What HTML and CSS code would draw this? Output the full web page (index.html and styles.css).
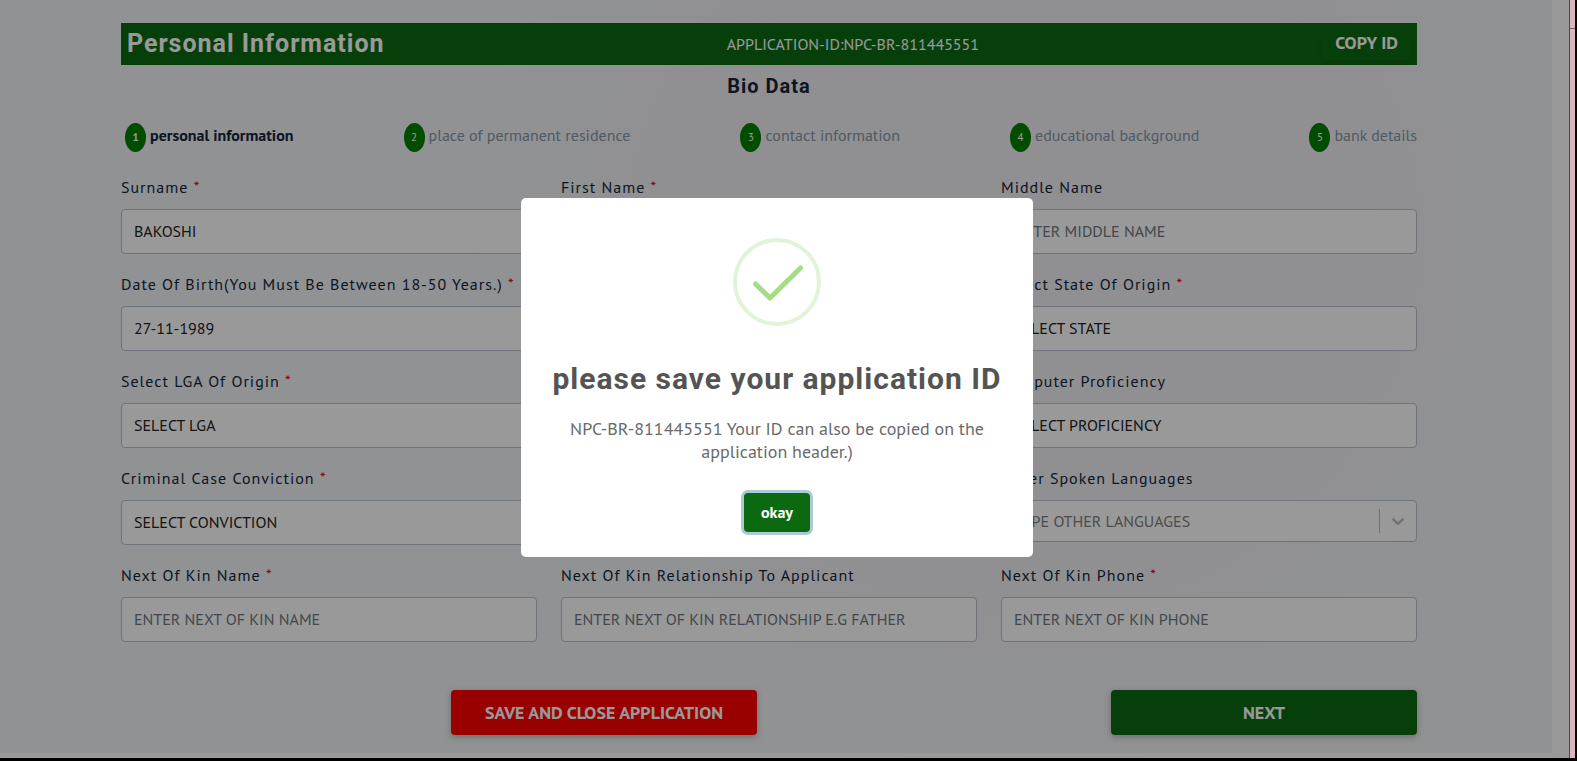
FILE: index.html
```html
<!DOCTYPE html>
<html lang="en">
<head>
<meta charset="utf-8">
<meta name="viewport" content="width=device-width, initial-scale=1">
<title>Personal Information</title>
<link rel="stylesheet" href="styles.css">
</head>
<body>
<div class="screen">
  <div class="app">
    <main class="page">
      <header class="bar">
        <h1 class="bar-title">Personal Information</h1>
        <span class="bar-id">APPLICATION-ID:NPC-BR-811445551</span>
        <button class="bar-copy" type="button">COPY ID</button>
      </header>
      <h2 class="section-title">Bio Data</h2>

      <ol class="steps">
        <li class="step step-active"><span class="step-num">1</span>personal information</li>
        <li class="step"><span class="step-num">2</span>place of permanent residence</li>
        <li class="step"><span class="step-num">3</span>contact information</li>
        <li class="step"><span class="step-num">4</span>educational background</li>
        <li class="step"><span class="step-num">5</span>bank details</li>
      </ol>

      <form class="form">
        <div class="fields">
          <div class="field">
            <label class="label" for="surname">Surname <span class="req">*</span></label>
            <input class="control" id="surname" type="text" value="BAKOSHI">
          </div>
          <div class="field">
            <label class="label" for="first">First Name <span class="req">*</span></label>
            <input class="control" id="first" type="text">
          </div>
          <div class="field">
            <label class="label" for="middle">Middle Name</label>
            <input class="control" id="middle" type="text" placeholder="ENTER MIDDLE NAME">
          </div>
          <div class="field">
            <label class="label" for="dob">Date Of Birth(You Must Be Between 18-50 Years.) <span class="req">*</span></label>
            <input class="control" id="dob" type="text" value="27-11-1989">
          </div>
          <div class="field">
            <label class="label" for="gender">&nbsp;</label>
            <select class="control" id="gender"><option></option></select>
          </div>
          <div class="field">
            <label class="label" for="state">Select State Of Origin <span class="req">*</span></label>
            <select class="control" id="state"><option>SELECT STATE</option></select>
          </div>
          <div class="field">
            <label class="label" for="lga">Select LGA Of Origin <span class="req">*</span></label>
            <select class="control" id="lga"><option>SELECT LGA</option></select>
          </div>
          <div class="field">
            <label class="label" for="education">&nbsp;</label>
            <select class="control" id="education"><option></option></select>
          </div>
          <div class="field">
            <label class="label" for="computer">Computer Proficiency</label>
            <select class="control" id="computer"><option>SELECT PROFICIENCY</option></select>
          </div>
          <div class="field">
            <label class="label" for="conviction">Criminal Case Conviction <span class="req">*</span></label>
            <select class="control" id="conviction"><option>SELECT CONVICTION</option></select>
          </div>
          <div class="field">
            <label class="label" for="language">&nbsp;</label>
            <select class="control" id="language"><option></option></select>
          </div>
          <div class="field">
            <label class="label" for="languages">Other Spoken Languages</label>
            <div class="combo">
              <input class="combo-input" id="languages" type="text" placeholder="TYPE OTHER LANGUAGES">
              <button class="combo-toggle" type="button" aria-label="Show languages">
                <svg width="20" height="20" viewBox="0 0 20 20" aria-hidden="true"><path d="M4.516 7.548c0.436-0.446 1.043-0.481 1.576 0l3.908 3.747 3.908-3.747c0.533-0.481 1.141-0.446 1.574 0 0.436 0.445 0.408 1.197 0 1.615-0.406 0.418-4.695 4.502-4.695 4.502-0.217 0.223-0.502 0.335-0.787 0.335s-0.57-0.112-0.789-0.335c0 0-4.287-4.084-4.695-4.502s-0.436-1.17 0-1.615z"/></svg>
              </button>
            </div>
          </div>
          <div class="field">
            <label class="label" for="kin">Next Of Kin Name <span class="req">*</span></label>
            <input class="control" id="kin" type="text" placeholder="ENTER NEXT OF KIN NAME">
          </div>
          <div class="field">
            <label class="label" for="relation">Next Of Kin Relationship To Applicant</label>
            <input class="control" id="relation" type="text" placeholder="ENTER NEXT OF KIN RELATIONSHIP E.G FATHER">
          </div>
          <div class="field">
            <label class="label" for="kinphone">Next Of Kin Phone <span class="req">*</span></label>
            <input class="control" id="kinphone" type="tel" placeholder="ENTER NEXT OF KIN PHONE">
          </div>
        </div>
        <div class="actions">
          <button class="action action-save" type="button">SAVE AND CLOSE APPLICATION</button>
          <button class="action action-next" type="button">NEXT</button>
        </div>
      </form>
    </main>

    <div class="overlay">
      <div class="modal" role="dialog" aria-modal="true" aria-labelledby="modal-title">
        <svg class="modal-icon" width="88" height="88" viewBox="0 0 88 88" fill="none" aria-hidden="true">
          <circle cx="44" cy="44" r="42" stroke="#e2f3d8" stroke-width="4"/>
          <path d="M22.500 46L37 60L67.500 30" stroke="#a5dc86" stroke-width="5" stroke-linecap="round" stroke-linejoin="round"/>
        </svg>
        <h2 class="modal-title" id="modal-title">please save your application ID</h2>
        <p class="modal-text">NPC-BR-811445551 Your ID can also be copied on the application header.)</p>
        <button class="modal-ok" type="button">okay</button>
      </div>
    </div>
  </div>
  <div class="edge"></div>
</div>
</body>
</html>
```
FILE: styles.css
```css
* {
  box-sizing: border-box;
}

body {
  margin: 0;
  background: #000;
  color: #15263a;
  font: 16px/24px "PT Sans", "Noto Sans", sans-serif;
}

button,
input,
select {
  font: inherit;
  color: inherit;
}

.screen {
  display: flex;
  min-height: 100vh;
  padding: 0 2px 3px 0;
}

.app {
  position: relative;
  flex: 1;
  padding: 0 17px 5px 0;
  background: #fff;
}

.edge {
  width: 6px;
  border-left: 1px solid #4c4648;
  background: linear-gradient(#6f6064, #6f6064) 0 28px / 100% 1px no-repeat #d8b6bc;
}

.page {
  height: 100%;
  padding: 23px 135px 17px 121px;
  background:
    radial-gradient(ellipse 36% 70% at 66% 32%, rgba(240, 222, 234, 0.25), transparent),
    #f1f3f6;
}

.bar {
  display: flex;
  align-items: center;
  justify-content: space-between;
  height: 42px;
  padding: 0 5px 0 6px;
  background: #0b6a10;
  color: #fff;
}

.bar-title {
  margin: 0;
  font: 700 25px/32px Roboto, sans-serif;
  letter-spacing: 1px;
}

.bar-copy {
  padding: 3px 14px 5px;
  border: 0;
  border-radius: 4px;
  background: none;
  box-shadow: 0 2px 4px rgba(0, 0, 0, 0.1);
  font-size: 18px;
  font-weight: 700;
}

.section-title {
  margin: 9px 0 0;
  font: 700 20px/24px Roboto, sans-serif;
  letter-spacing: 1px;
  text-align: center;
}

.steps {
  display: flex;
  justify-content: space-between;
  margin: 24px 0 0;
  padding: 0;
  list-style: none;
}

.step {
  display: flex;
  align-items: flex-start;
  gap: 4px;
  padding-left: 4px;
  color: #8496a6;
  line-height: 26px;
}

.step-active {
  color: #15263a;
  font-weight: 700;
}

.step-num {
  width: 21px;
  margin-top: 1px;
  border-radius: 50%;
  background: green;
  color: #fff;
  font-size: 11px;
  line-height: 29px;
  text-align: center;
}

.form {
  margin-top: 24px;
}

.fields {
  display: grid;
  grid-template-columns: repeat(3, 1fr);
  gap: 19px 24px;
}

.label {
  display: block;
  margin-bottom: 11px;
  line-height: 22px;
  letter-spacing: 1px;
}

.req {
  color: #f0001b;
}

.control,
.combo {
  display: block;
  width: 100%;
  height: 45px;
  padding: 0 12px 2px;
  border: 1px solid #b9c0cf;
  border-radius: 4px;
  background: #fff;
  color: #222;
  appearance: none;
}

.control::placeholder {
  color: #6f7780;
  opacity: 1;
}

.combo {
  display: flex;
  align-items: center;
  height: 42px;
  padding: 0 0 0 12px;
}

.combo-input {
  flex: 1;
  min-width: 0;
  padding: 0;
  border: 0;
  background: none;
}

.combo-input::placeholder {
  color: #808080;
  opacity: 1;
}

.combo-toggle {
  height: 24px;
  padding: 0 8px;
  border: 0;
  border-left: 1px solid #bbb;
  background: none;
  fill: #bbb;
}

.combo-toggle svg {
  display: block;
}

.actions {
  display: grid;
  grid-template-columns: repeat(4, 1fr);
  gap: 24px;
  margin-top: 48px;
}

.action {
  height: 45px;
  border: 0;
  border-radius: 4px;
  box-shadow: 0 2px 6px rgba(0, 0, 0, 0.25);
  color: #fff;
  font-size: 18px;
  font-weight: 700;
}

.action-save {
  grid-column: 2;
  background: red;
}

.action-next {
  grid-column: 4;
  background: #0b6a10;
}

.overlay {
  position: absolute;
  inset: 0;
  display: flex;
  align-items: center;
  justify-content: center;
  padding: 0 15px 4px 0;
  background: rgba(0, 0, 0, 0.4);
}

.modal {
  display: flex;
  flex-direction: column;
  align-items: center;
  width: 512px;
  padding: 40px 20px 25px;
  border-radius: 5px;
  background: #fff;
  text-align: center;
}

.modal-icon {
  display: block;
}

.modal-title {
  margin: 35px 0 0;
  color: #545454;
  font: 700 30px/36px Roboto, sans-serif;
  letter-spacing: 1px;
}

.modal-text {
  width: 432px;
  margin: 20px 0 0;
  color: #6a6a6a;
  font-size: 18px;
  line-height: 23px;
}

.modal-ok {
  height: 39px;
  margin: 30px 0 0;
  padding: 0 17px;
  border: 0;
  border-radius: 4px;
  background: #0b6a10;
  box-shadow: 0 0 0 3px #abc9d6;
  color: #fff;
  font-weight: 700;
}
```
